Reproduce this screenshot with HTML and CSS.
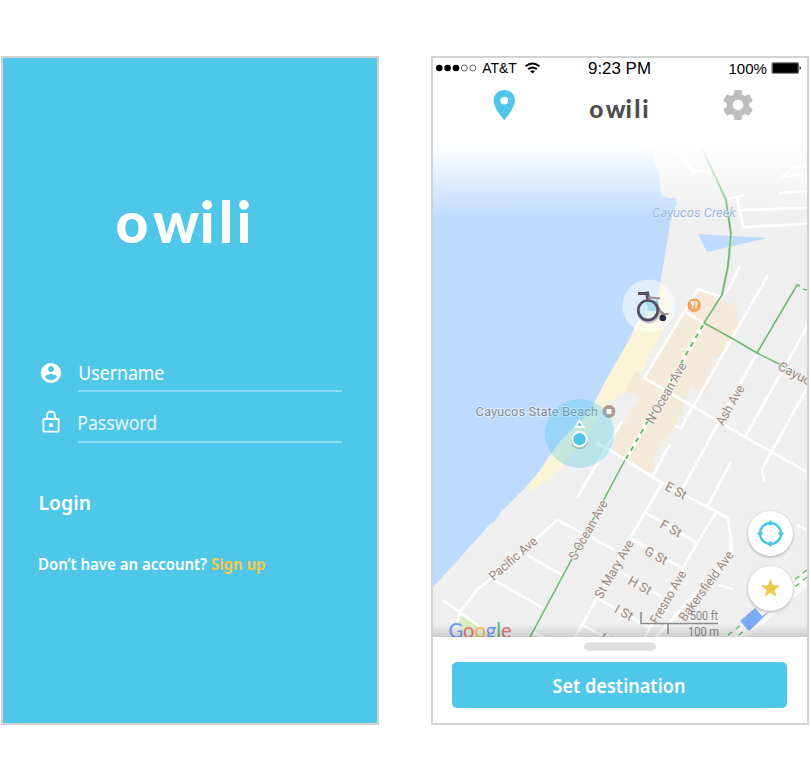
FILE: index.html
```html
<!DOCTYPE html>
<html lang="en">
<head>
<meta charset="utf-8">
<title>owili</title>
<link rel="stylesheet" href="styles.css">
</head>
<body>
<main class="screens">
  <section class="phone login">
    <svg class="login-logo" viewBox="0 0 140 60" role="img" aria-label="owili"><text x="-0.5 37 83.700 102.800 120.600" y="46">owili</text></svg>
    <form class="form">
      <div class="field">
        <svg class="field-icon" viewBox="0 0 24 24"><path fill="#fff" d="M12 2C6.480 2 2 6.480 2 12s4.480 10 10 10 10-4.480 10-10S17.520 2 12 2zm0 3c1.660 0 3 1.340 3 3s-1.340 3-3 3-3-1.340-3-3 1.340-3 3-3zm0 14.200c-2.500 0-4.710-1.280-6-3.220.03-1.990 4-3.080 6-3.080 1.990 0 5.970 1.090 6 3.080-1.290 1.940-3.500 3.220-6 3.220z"/></svg>
        <div class="field-line"><svg class="field-text" viewBox="0 0 264 32"><text x="0.300" y="21.200" textLength="86" lengthAdjust="spacingAndGlyphs">Username</text></svg></div>
      </div>
      <div class="field">
        <svg class="field-icon" viewBox="0 0 24 24"><path fill="none" stroke="#fff" stroke-width="1.800" d="M5.200 9h13.600a.8.8 0 0 1 .8.8v11a.8.8 0 0 1-.8.8H5.200a.8.8 0 0 1-.8-.8v-11a.8.8 0 0 1 .8-.8zM8 9V5.500a4 4 0 0 1 8 0V9"/><circle cx="12" cy="15.200" r="2.100" fill="#fff"/></svg>
        <div class="field-line"><svg class="field-text dim" viewBox="0 0 264 32"><text x="-0.800" y="20.500" textLength="80" lengthAdjust="spacingAndGlyphs">Password</text></svg></div>
      </div>
    </form>
    <svg class="login-action" viewBox="0 0 100 32"><text x="-0.500" y="22.500" textLength="52.500" lengthAdjust="spacingAndGlyphs">Login</text></svg>
    <svg class="signup" viewBox="0 0 260 26"><text x="-1" y="17.300" textLength="169" lengthAdjust="spacingAndGlyphs">Don’t have an account?</text><text class="signup-link" x="172" y="17.300" textLength="54.500" lengthAdjust="spacingAndGlyphs">Sign up</text></svg>
  </section>

  <section class="phone home">
    <header class="top">
      <svg class="status" viewBox="433 58 374 22">
        <g><circle cx="439.300" cy="68" r="3.300"/><circle cx="447.600" cy="68" r="3.300"/><circle cx="456" cy="68" r="3.300"/></g>
        <g fill="none" stroke="#222" stroke-width=".7"><circle cx="464.300" cy="68" r="3"/><circle cx="472.800" cy="68" r="3"/></g>
        <text x="482.200" y="73.400" font-size="14" textLength="34.500" lengthAdjust="spacingAndGlyphs">AT&amp;T</text>
        <g fill="none" stroke="#000" stroke-width="1.900"><path d="M525.500 66.300q7-5.600 14 0"/><path d="M528.200 69.300q4.300-3.600 8.600 0"/></g><path d="M530.200 71.200q2.300-1.800 4.600 0l-2.300 2.200z"/>
        <text x="588" y="74" font-size="16.800" textLength="63" lengthAdjust="spacingAndGlyphs">9:23 PM</text>
        <text x="728.500" y="73.500" font-size="14.500" textLength="38.500" lengthAdjust="spacingAndGlyphs">100%</text>
        <rect x="771.500" y="62.300" width="27.500" height="11.500" rx="1.500" fill="#666"/><rect x="773" y="63.400" width="24.600" height="9.300"/><path d="M799.700 65.500q2.200 2.500 0 5z"/>
      </svg>
      <nav class="nav">
        <svg class="nav-icon" viewBox="0 0 36 36"><path fill="#4fc7e9" fill-rule="evenodd" d="M18.300 3C12.300 3 7.600 7.600 7.600 13.500 7.600 21.500 18.300 33 18.300 33s10.700-11.500 10.700-19.500C29 7.600 24.300 3 18.300 3zm0 6.700a3.900 3.900 0 1 1 0 7.800 3.900 3.900 0 0 1 0-7.800z"/></svg>
        <svg class="nav-logo" viewBox="0 0 64 30"><text x="0.300 16.700 36.600 45.200 53.200" y="23.500">owili</text></svg>
        <svg class="nav-icon gear" viewBox="0 0 24 24"><path fill="#bdbdbd" d="M19.430 12.980c.04-.32.070-.64.070-.98s-.03-.66-.07-.98l2.110-1.650c.19-.15.240-.42.120-.64l-2-3.460c-.12-.22-.39-.3-.61-.22l-2.490 1c-.52-.4-1.080-.73-1.690-.98l-.38-2.650C14.460 2.180 14.250 2 14 2h-4c-.25 0-.46.180-.49.420l-.38 2.650c-.61.250-1.170.59-1.690.98l-2.490-1c-.23-.09-.49 0-.61.220l-2 3.460c-.13.220-.07.490.12.640l2.110 1.650c-.04.320-.07.650-.07.980s.03.660.070.980l-2.110 1.650c-.19.150-.24.420-.12.640l2 3.460c.12.220.39.300.61.220l2.490-1c.52.400 1.080.73 1.690.98l.38 2.650c.03.240.24.420.49.420h4c.25 0 .46-.18.490-.42l.38-2.650c.61-.25 1.170-.59 1.690-.98l2.490 1c.23.090.49 0 .61-.22l2-3.460c.12-.22.070-.49-.12-.64l-2.110-1.650zM12 15.500c-1.930 0-3.500-1.570-3.500-3.500s1.570-3.500 3.500-3.500 3.500 1.570 3.500 3.500-1.570 3.500-3.500 3.500z"/></svg>
      </nav>
    </header>

    <div class="map-area">
      <svg class="map" viewBox="433 140 374 497">
        <defs>
          <linearGradient id="fade" x1="0" y1="0" x2="0" y2="1"><stop offset="0" stop-color="#fff"/><stop offset=".06" stop-color="#fff"/><stop offset="1" stop-color="#fff" stop-opacity="0"/></linearGradient>
          <linearGradient id="edge" x1="0" y1="0" x2="0" y2="1"><stop offset="0" stop-color="#000" stop-opacity="0"/><stop offset="1" stop-color="#000" stop-opacity=".14"/></linearGradient>
        </defs>
        <rect x="433" y="140" width="374" height="497" fill="#efefef"/>
        <path fill="#fbf4d6" d="M661 283L672 303 668 322 648 357 644 369 625 393 607 402 585 440 562 466 550 479 533 491 524 484 600 385z"/>
        <path fill="#bedbff" d="M433 140H653V160L659 173 661 195 668 198H675L677 203 673 212 670 225 660 285 656 305 637 322 630 338 606 380 589 413 560 441 538 473 525 488 500 513 495 521 490 524 458 560 433 587z"/>
        <path fill="#f5e9da" d="M697 289L739 308 736 318 741 321 727 350 717 358 712 355 711 361 713 368 706 379 712 382 707 394 691 387 686 398 682 413 677 420 678 428 670 432 660 448 653 458 655 465 649 475 611 452 613 440 638 398 626 390 636 371 644 378 685 309z"/>
        <path fill="#bedbff" d="M698 234L767 238 707 252z"/>
        <path fill="#dcedc4" d="M459 615L482 628 470 633 456 624z"/>
        <g class="streets">
          <path d="M675 149L693 171 711 172M807 165L791 169 783 176 807 174M778 193L807 191M728 199L744 195M737 197L743 227 807 224M741 210L807 208"/>
          <path d="M740 265L730 287 722 297 698 289 644 378 672 394 745 437 807 472M684 311L704 323M768 275L681 428 675 426M807 327L745 437M757 353L709 440 683 488M807 388L762 469 764 481M731 462L707 507M670 444L653 476M622 421L577 498M596 443L610 450 662 483 719 513 728 518 731 540V555L656 637"/>
          <path d="M661 485L632 535 582 625 575 637M646 513L697 543M630 538L683 569M716 513L697 543 645 637M557 520L535 540 495 575 477 590 460 612 457 625M557 520L615 550M617 570L662 597M597 598L650 628M582 625L605 637M527 555L562 575M492 579L543 608M443 600L480 627M718 585L733 589M797 525L807 530M533 632L545 638"/>
          <path class="highway" d="M815 573L731 643"/>
        </g>
        <path fill="none" stroke="#5dbb62" stroke-width="1.300" stroke-dasharray="5 5" d="M807 570L793 581M728 635L742 624M807 577L795 587M739 635L748 627"/>
        <path fill="#7baaf7" d="M740 621L755 608 762 616 770 611 749 631z"/>
        <path fill="none" stroke="#c5e2c6" stroke-width="2.800" d="M702 148L726 200 731 234 728 266 722 295"/>
        <path fill="none" stroke="#67ba6b" stroke-width="1.500" d="M702 148L726 200 731 234 728 266 722 295 704 323 735 340 757 353 787 368M757 353L797 285 800 286M803 289L807 290M625 460L530 637"/>
        <path stroke="#fff" stroke-width="4" d="M703 325L626 459"/><path stroke="#67ba6b" stroke-width="2" stroke-dasharray="5 5" d="M703 325L626 459"/>
        <rect x="433" y="140" width="374" height="78" fill="url(#fade)"/>
        <g class="place"><text class="creek" x="652" y="217" textLength="84" lengthAdjust="spacingAndGlyphs">Cayucos Creek</text><text x="475.500" y="416" textLength="122.500" lengthAdjust="spacingAndGlyphs">Cayucos State Beach</text></g>
        <g class="road-names">
          <text transform="translate(666 393) rotate(-60)" textLength="68" lengthAdjust="spacingAndGlyphs">N Ocean Ave</text>
          <text transform="translate(730 405) rotate(-60)" textLength="44" lengthAdjust="spacingAndGlyphs">Ash Ave</text>
          <text class="from-start" transform="translate(779 365) rotate(28)">Cayuc</text>
          <text transform="translate(588 530) rotate(-61)" textLength="66" lengthAdjust="spacingAndGlyphs">S Ocean Ave</text>
          <text transform="translate(513 558.500) rotate(-41)" textLength="59" lengthAdjust="spacingAndGlyphs">Pacific Ave</text>
          <text transform="translate(614 569) rotate(-60)" textLength="65" lengthAdjust="spacingAndGlyphs">St Mary Ave</text>
          <text transform="translate(668 597) rotate(-60)" textLength="59" lengthAdjust="spacingAndGlyphs">Fresno Ave</text>
          <text transform="translate(706 586) rotate(-54)" textLength="83" lengthAdjust="spacingAndGlyphs">Bakersfield Ave</text>
          <text transform="translate(676 490.500) rotate(28)">E St</text>
          <text transform="translate(671 528.500) rotate(28)">F St</text>
          <text transform="translate(656 555.500) rotate(28)">G St</text>
          <text transform="translate(640 585.500) rotate(28)">H St</text>
          <text transform="translate(624 612.500) rotate(28)">I St</text>
          <text transform="translate(608 640) rotate(28)">J St</text>
        </g>
        <path fill="none" stroke="#8b8b8b" stroke-width="1.500" d="M641 612V623.500H718M668 623.500V634"/>
        <g class="scale"><text x="690" y="619.500" textLength="28" lengthAdjust="spacingAndGlyphs">500 ft</text><text x="688" y="635.500" textLength="31" lengthAdjust="spacingAndGlyphs">100 m</text></g>
        <text class="google" x="448.500" y="637.500" textLength="63" lengthAdjust="spacingAndGlyphs"><tspan fill="#6d9cf0">G</tspan><tspan fill="#e9776c">o</tspan><tspan fill="#f5c74c">o</tspan><tspan fill="#6d9cf0">g</tspan><tspan fill="#61b779">l</tspan><tspan fill="#e9776c">e</tspan></text>
        <rect x="433" y="624" width="374" height="13" fill="url(#edge)"/>
        <circle cx="694.200" cy="305.200" r="6.800" fill="#f7a35c"/><path d="M691.500 301v3q1.300 2 2.500 0v-3M692.750 301v8M696 309v-8q2 1 1 4.500h-1" fill="none" stroke="#fff" stroke-width="1"/>
        <circle cx="609" cy="411.500" r="6.500" fill="#b0988f"/><rect x="606.500" y="409" width="5" height="5" rx=".7" fill="#fff"/>
        <circle cx="579.500" cy="433.500" r="34.500" fill="#4fc7e9" fill-opacity=".33"/>
        <path d="M579.500 420.500l4 6.300h-8z" fill="#4fc7e9" stroke="#fff" stroke-width="2"/>
        <circle cx="579.500" cy="440.700" r="8.500" fill="#345" opacity=".25"/><circle cx="579.500" cy="439.200" r="7.200" fill="#4fc7e9" stroke="#fff" stroke-width="2"/>
        <circle cx="648.800" cy="306" r="26.500" fill="#fff" fill-opacity=".5"/>
        <g fill="none"><path stroke="#777" stroke-opacity=".35" stroke-width="3" d="M639 312a10 10 0 0 0 20 0"/><path fill="#8ed3e3" d="M646 302l12-2 1 11h-10z"/><path stroke="#564f55" stroke-width="3" d="M638 293.500h9.500"/><path stroke="#5b5270" stroke-width="4" d="M646.800 291.500l1.500 8"/><path stroke="#9b9096" stroke-width="2.200" d="M648 297.500l12 .8M656 303l7 13M657 309l7 5 4.500 0"/><circle cx="648" cy="310.300" r="9.800" fill="#c0e6f0" fill-opacity=".45" stroke="#514f68" stroke-width="2.700"/><circle cx="662.800" cy="318" r="3.300" fill="#29294a"/></g>
      </svg>
      <div class="map-buttons">
        <button class="round" aria-label="Locate"><svg viewBox="0 0 45 45"><circle cx="22.500" cy="22.500" r="10.500" fill="none" stroke="#4fc7e9" stroke-width="2.500"/><path stroke="#4fc7e9" stroke-width="2.500" d="M22.500 9.500v5M22.500 30.500v5M9.500 22.500h5M30.500 22.500h5"/></svg></button>
        <button class="round" aria-label="Favorites"><svg viewBox="0 0 45 45"><path fill="#f3c74b" d="M22.500 12.300l2.450 7 7.400.15-5.900 4.500 2.150 7.100-6.100-4.250-6.100 4.250 2.150-7.100-5.900-4.500 7.400-.15z"/></svg></button>
      </div>
    </div>

    <footer class="sheet">
      <div class="handle"></div>
      <button class="destination"><svg viewBox="0 0 335 46"><text x="100.500" y="31" textLength="133" lengthAdjust="spacingAndGlyphs">Set destination</text></svg></button>
    </footer>
  </section>
</main>
</body>
</html>
```

FILE: styles.css
```css
* { box-sizing: border-box; }
body { margin: 0; background: #fff; font-family: "Noto Sans", sans-serif; }
svg { display: block; }
button { border: 0; padding: 0; font: inherit; }

.screens { display: flex; gap: 52px; padding: 56px 0 0 1px; }
.phone { width: 378px; height: 669px; flex: none; border: 2px solid #d1d3d3; overflow: hidden; display: flex; flex-direction: column; }

.login { background: #4fc7e9; padding: 139px 35px 0; }
.login-logo { width: 140px; height: 60px; margin-left: 78px; overflow: visible; fill: #fff; font: 900 57px Lato, sans-serif; }
.form { margin-top: 102px; }
.field { display: flex; height: 51px; }
.field:first-child { height: 50px; }
.field-icon { width: 24px; height: 24px; margin: 2px 15px 0 1px; }
.field-line { width: 264px; height: 33px; border-bottom: 2px solid #8bdbf1; }
.field + .field .field-line { height: 34px; }
.field + .field .field-icon { margin-top: 1px; }
.field-text { width: 264px; height: 32px; overflow: visible; fill: #fff; font-size: 19px; }
.dim { fill: #e6f3f7; }
.login-action { width: 100px; height: 32px; margin: 27px 0 0 1px; fill: #fff; font-size: 20px; font-weight: 600; overflow: visible; }
.signup { width: 260px; height: 26px; margin: 34px 0 0 1px; overflow: visible; fill: #fff; font-size: 15.500px; font-weight: 600; }
.signup-link { fill: #f3c74b; font-weight: 700; }

.home { background: #fff; }
.top { height: 82px; }
.status { width: 374px; height: 22px; font-family: "Liberation Sans", sans-serif; }
.nav { display: flex; justify-content: space-between; padding: 7px 51px 0 53px; }
.nav-icon { width: 36px; height: 36px; }
.nav-logo { width: 64px; height: 30px; margin: 7px 0 0 -1px; fill: #4d4d4f; font: 900 24.500px Lato, sans-serif; overflow: visible; }

.map-area { position: relative; height: 497px; }
.map { width: 374px; height: 497px; font-family: Roboto, sans-serif; }
.streets { fill: none; stroke: #fff; stroke-width: 2.700; }
.streets .highway { stroke-width: 11; stroke: #fafafa; }
.place { font-size: 13px; fill: #858d95; stroke: #ffffff80; stroke-width: 2px; paint-order: stroke; }
.creek { fill: #9bb8e3; font-style: italic; stroke-width: 1px; }
.road-names { font-size: 13px; fill: #9b8780; text-anchor: middle; dominant-baseline: central; stroke: #f5f3f1; stroke-width: 2px; paint-order: stroke; }
.from-start { text-anchor: start; }
.scale { font-size: 12px; fill: #858585; }
.google { font: 400 21px Lato, sans-serif; stroke-width: .4px; }
.map-buttons { position: absolute; right: 14px; top: 371px; display: flex; flex-direction: column; gap: 10px; }
.round { width: 45px; height: 45px; border-radius: 50%; background: #fff; box-shadow: 0 1px 3px rgba(0, 0, 0, .3); }

.sheet { flex: 1; padding: 5px 18px 0 19px; }
.handle { width: 72px; height: 9px; margin: 0 0 0 132px; border-radius: 5px; background: #dedede; border: 1px solid #e8e8e8; }
.destination { display: block; width: 335px; height: 46px; margin: 11px 0 0; border-radius: 5px; background: #4fc7e9; fill: #fff; font-size: 20px; font-weight: 600; }
```
